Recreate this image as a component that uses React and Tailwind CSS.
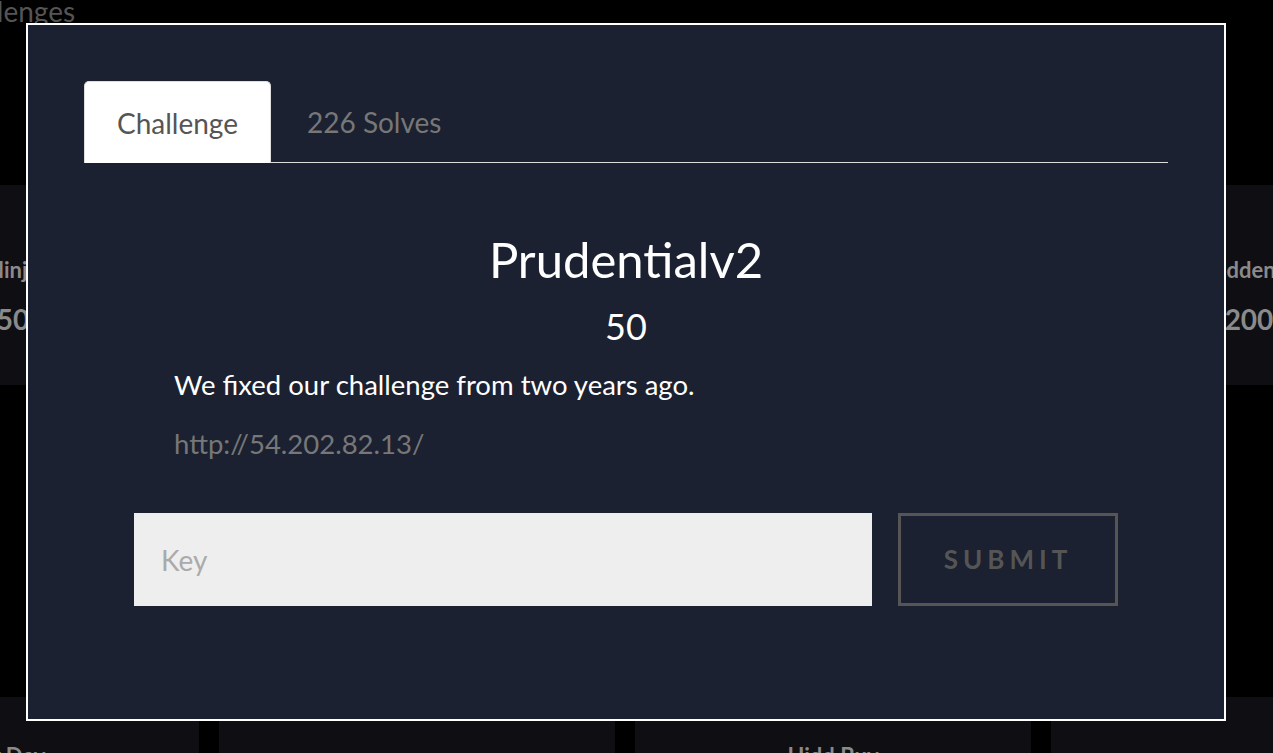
import React from 'react';

const topCards = [
  { name: 'Ninja', points: 50, shift: 'pl-[24px]' },
  { name: 'Prudentialv2', points: 50, shift: '' },
  { name: 'Feedback', points: 100, shift: '' },
  { name: 'Hidden 2', points: 200, shift: '' },
];

const bottomCards = [
  { name: 'Lazy Dev', points: 100 },
  { name: '', points: null },
  { name: 'Hidd Buy', points: 200 },
  { name: '', points: null },
];

function Card({ name, points, className = '' }) {
  return (
    <div className={`bg-[#0f0e13] flex flex-col items-center ${className}`}>
      <div className="text-[22px] font-bold text-[#8a8a8a] leading-none">{name}</div>
      <div className="text-[28px] font-bold text-[#8a8a8a] leading-none mt-[24px]">{points}</div>
    </div>
  );
}

export default function App() {
  return (
    <div className="relative w-full h-[753px] overflow-hidden bg-black font-['Lato','Liberation_Sans',sans-serif]">
      {/* page behind the modal */}
      <div className="ml-[-58px] mt-[-7px] text-[28px] text-[#555] leading-[36px]">Challenges</div>
      <div className="ml-[-197px] mt-[156px] grid grid-cols-[396px_396px_396px_396px] gap-x-[20px] w-max">
        {topCards.map((c) => (
          <Card key={c.name} name={c.name} points={c.points} className={`h-[200px] pt-[74px] ${c.shift}`} />
        ))}
      </div>
      <div className="ml-[-197px] mt-[312px] grid grid-cols-[396px_396px_396px_396px] gap-x-[20px] w-max">
        {bottomCards.map((c, i) => (
          <Card key={i} {...c} className="h-[200px] pt-[48px]" />
        ))}
      </div>

      {/* modal */}
      <div className="absolute left-[26px] top-[23px] w-[1200px] h-[698px] border-2 border-white bg-[#1b2130] px-[56px] pt-[56px]">
        <div className="flex border-b border-[#dddddd] h-[82px]">
          <div className="w-[187px] h-[82px] bg-white border border-[#dddddd] border-b-0 rounded-t-[5px] flex items-center justify-center text-[28px] text-[#555]">
            Challenge
          </div>
          <div className="px-[36px] flex items-center text-[28px] text-[#777]">226 Solves</div>
        </div>

        <div className="text-center text-white mt-[68px]">
          <h1 className="text-[49px] leading-[56px]">Prudentialv2</h1>
          <div className="text-[36px] leading-[40px] mt-[19px]">50</div>
        </div>

        <div className="mx-[90px] mt-[23px]">
          <p className="text-[27.5px] text-white leading-[32px]">We fixed our challenge from two years ago.</p>
          <p className="text-[27.5px] text-[#777] leading-[32px] mt-[27px]">http://54.202.82.13/</p>
        </div>

        <div className="mx-[50px] mt-[53px] flex gap-[26px]">
          <input
            placeholder="Key"
            className="flex-1 h-[93px] bg-[#eeeeee] px-[27px] text-[28px] text-[#555] placeholder:text-[#aaa] outline-none"
          />
          <button className="w-[220px] h-[93px] border-[3px] border-[#555] text-[26px] font-bold tracking-[5px] text-[#555]">
            SUBMIT
          </button>
        </div>
      </div>
    </div>
  );
}
